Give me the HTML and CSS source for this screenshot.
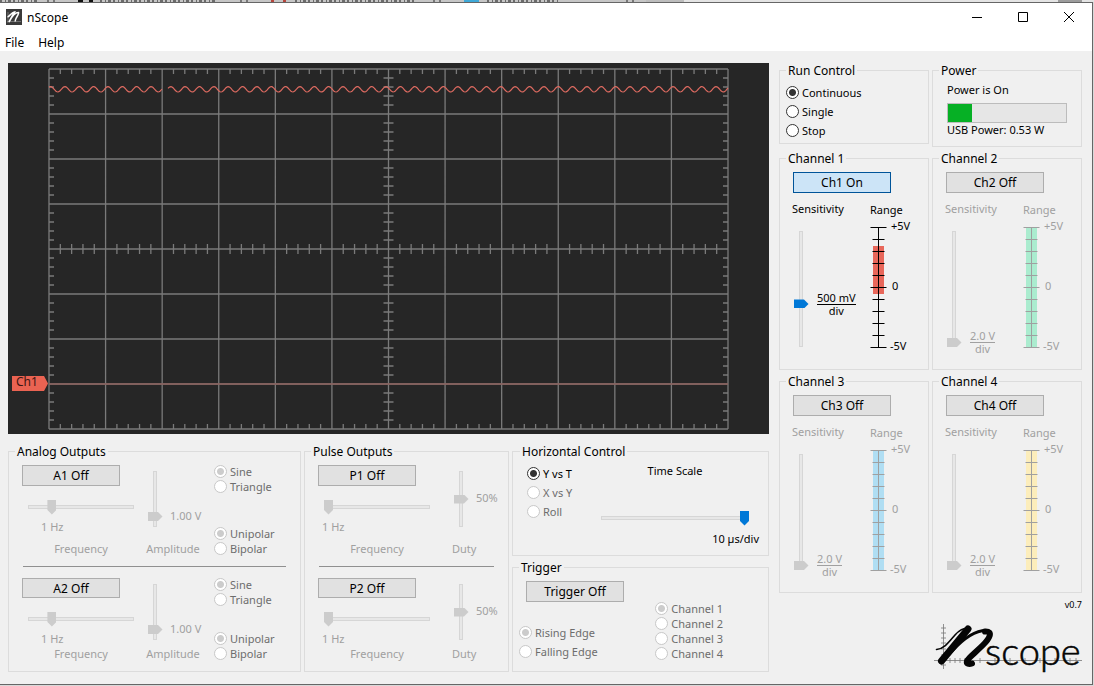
FILE: index.html
```html
<!DOCTYPE html>
<html lang="en">
<head>
<meta charset="utf-8">
<title>nScope</title>
<link rel="stylesheet" href="styles.css">
</head>
<body>
<svg class="backdrop" viewBox="0 0 1094 2" preserveAspectRatio="none" aria-hidden="true">
  <rect width="646" height="2" fill="#c6c6c6"/>
  <rect x="646" width="38" height="2" fill="#bdbdbd"/>
  <rect x="684" width="410" height="2" fill="#e4e4e4"/>
  <rect x="1058" width="24" height="2" fill="#9c9c9c"/>
  <path d="M0 1h38M100 1h117M295 1h120M487 1h73" stroke="#6b6b6b" stroke-width="2" stroke-dasharray="2 3 1 2 3 2"/>
  <path d="M78 1h5M89 1h4" stroke="#111" stroke-width="2"/>
  <path d="M271 1h3M283 1h3" stroke="#b5453c" stroke-width="2"/>
  <path d="M464 1h15" stroke="#3fa9d8" stroke-width="2"/>
  <path d="M47 1h8M240 1h8M433 1h8M626 1h8" stroke="#777" stroke-width="2" stroke-dasharray="2 4"/>
</svg>
<div class="window">
  <header class="titlebar">
    <svg class="app-icon" viewBox="0 0 16 16" aria-hidden="true">
      <rect width="16" height="16" fill="#3a3a3a"/>
      <path d="M2 3v11M1 12.500h14" stroke="#8a8a8a" stroke-width=".7"/>
      <path d="M1.500 8C4 7.500 5 3.500 8.500 3L3 13C5 9 9 3.500 12.500 3.500C13.500 5 8 11 9.500 12.500" fill="none" stroke="#fff" stroke-width="1.600"/>
    </svg>
    <h1 class="title">nScope</h1>
    <button class="caption" aria-label="Minimize"><svg viewBox="0 0 10 10"><path d="M0 5.500h10"/></svg></button>
    <button class="caption" aria-label="Maximize"><svg viewBox="0 0 10 10"><path d="M.5 .5h9v9h-9z"/></svg></button>
    <button class="caption" aria-label="Close"><svg viewBox="0 0 10 10"><path d="M0 0l10 10M10 0L0 10"/></svg></button>
  </header>
  <nav class="menu"><a href="#file">File</a><a href="#help">Help</a></nav>

  <main class="main">
    <div class="left">
      <svg class="scope" viewBox="0 0 761 371" role="img" aria-label="Oscilloscope display">
        <rect width="761" height="371" fill="#262626"/>
        <g id="grid" fill="none" stroke="#7a7a7a" stroke-width="1.300"></g>
        <path d="M41 321H720" stroke="#8b5f5b" stroke-width="1.600"/>
        <path id="trace" fill="none" stroke="#dc6a60" stroke-width="1.200"/>
        <path d="M4 313h32l4 7.500l-4 7.500H4z" fill="#ea6352"/>
        <text class="tag" x="8" y="323">Ch1</text>
      </svg>

      <div class="panels">
        <fieldset class="group">
          <legend>Analog Outputs</legend>
          <div class="output">
            <div class="freq">
              <button class="btn">A1 Off</button>
              <input class="slider" type="range" value="20" disabled aria-label="A1 frequency">
              <output class="hz hz-offset">1 Hz</output>
              <span class="caption-text">Frequency</span>
            </div>
            <div class="level amp">
              <div class="level-row"><input class="slider vertical" type="range" value="13" disabled aria-label="A1 amplitude"><output class="level-low">1.00 V</output></div>
              <span class="caption-text">Amplitude</span>
            </div>
            <div class="shapes">
              <div class="radios"><label><input type="radio" name="a1s" checked disabled>Sine</label><label><input type="radio" name="a1s" disabled>Triangle</label></div>
              <div class="radios"><label><input type="radio" name="a1p" checked disabled>Unipolar</label><label><input type="radio" name="a1p" disabled>Bipolar</label></div>
            </div>
          </div>
          <hr>
          <div class="output short">
            <div class="freq">
              <button class="btn">A2 Off</button>
              <input class="slider" type="range" value="20" disabled aria-label="A2 frequency">
              <output class="hz hz-offset">1 Hz</output>
              <span class="caption-text">Frequency</span>
            </div>
            <div class="level amp">
              <div class="level-row"><input class="slider vertical" type="range" value="13" disabled aria-label="A2 amplitude"><output class="level-low">1.00 V</output></div>
              <span class="caption-text">Amplitude</span>
            </div>
            <div class="shapes">
              <div class="radios"><label><input type="radio" name="a2s" checked disabled>Sine</label><label><input type="radio" name="a2s" disabled>Triangle</label></div>
              <div class="radios"><label><input type="radio" name="a2p" checked disabled>Unipolar</label><label><input type="radio" name="a2p" disabled>Bipolar</label></div>
            </div>
          </div>
        </fieldset>

        <fieldset class="group">
          <legend>Pulse Outputs</legend>
          <div class="output">
            <div class="freq">
              <button class="btn">P1 Off</button>
              <input class="slider" type="range" value="0" disabled aria-label="P1 frequency">
              <output class="hz">1 Hz</output>
              <span class="caption-text">Frequency</span>
            </div>
            <div class="level duty">
              <div class="level-row"><input class="slider vertical" type="range" value="50" disabled aria-label="P1 duty"><output class="level-mid">50%</output></div>
              <span class="caption-text">Duty</span>
            </div>
          </div>
          <hr>
          <div class="output short">
            <div class="freq">
              <button class="btn">P2 Off</button>
              <input class="slider" type="range" value="0" disabled aria-label="P2 frequency">
              <output class="hz">1 Hz</output>
              <span class="caption-text">Frequency</span>
            </div>
            <div class="level duty">
              <div class="level-row"><input class="slider vertical" type="range" value="50" disabled aria-label="P2 duty"><output class="level-mid">50%</output></div>
              <span class="caption-text">Duty</span>
            </div>
          </div>
        </fieldset>

        <div class="stack">
          <fieldset class="group horizontal">
            <legend>Horizontal Control</legend>
            <div class="radios loose"><label><input type="radio" name="mode" checked>Y vs T</label><label><input type="radio" name="mode" disabled>X vs Y</label><label><input type="radio" name="mode" disabled>Roll</label></div>
            <div class="timescale">
              <label for="ts">Time Scale</label>
              <input class="slider" id="ts" type="range" value="100">
              <output for="ts">10 µs/div</output>
            </div>
          </fieldset>
          <fieldset class="group trigger">
            <legend>Trigger</legend>
            <div class="trigger-left">
              <button class="btn">Trigger Off</button>
              <div class="radios loose"><label><input type="radio" name="edge" checked disabled>Rising Edge</label><label><input type="radio" name="edge" disabled>Falling Edge</label></div>
            </div>
            <div class="radios trigger-source"><label><input type="radio" name="src" checked disabled>Channel 1</label><label><input type="radio" name="src" disabled>Channel 2</label><label><input type="radio" name="src" disabled>Channel 3</label><label><input type="radio" name="src" disabled>Channel 4</label></div>
          </fieldset>
        </div>
      </div>
    </div>

    <aside class="right">
      <fieldset class="group run">
        <legend>Run Control</legend>
        <div class="radios loose"><label><input type="radio" name="run" checked>Continuous</label><label><input type="radio" name="run">Single</label><label><input type="radio" name="run">Stop</label></div>
      </fieldset>
      <fieldset class="group power">
        <legend>Power</legend>
        <label for="usb">Power is On</label>
        <progress id="usb" value="20" max="100"></progress>
        <span>USB Power: 0.53 W</span>
      </fieldset>

      <fieldset class="group channel on">
        <legend>Channel 1</legend>
        <button class="btn active">Ch1 On</button>
        <div class="channel-body">
          <div class="sens">
            <label for="s1">Sensitivity</label>
            <div class="sens-row"><input class="slider vertical" id="s1" type="range" value="36"><output class="fraction mid"><span>500 mV</span><span>div</span></output></div>
          </div>
          <div class="range"><span>Range</span><svg viewBox="0 0 50 136"><rect x="5" y="28" width="11" height="48" fill="#e8675a"/><path class="ticks"/><text x="23" y="12">+5V</text><text x="24" y="72">0</text><text x="22" y="132">-5V</text></svg></div>
        </div>
      </fieldset>
      <fieldset class="group channel">
        <legend>Channel 2</legend>
        <button class="btn">Ch2 Off</button>
        <div class="channel-body">
          <div class="sens">
            <label for="s2">Sensitivity</label>
            <div class="sens-row"><input class="slider vertical" id="s2" type="range" value="0" disabled><output class="fraction"><span>2.0 V</span><span>div</span></output></div>
          </div>
          <div class="range"><span>Range</span><svg viewBox="0 0 50 136"><rect x="5" y="9" width="11" height="121" fill="#abeccf"/><path class="ticks"/><text x="23" y="12">+5V</text><text x="24" y="72">0</text><text x="22" y="132">-5V</text></svg></div>
        </div>
      </fieldset>
      <fieldset class="group channel">
        <legend>Channel 3</legend>
        <button class="btn">Ch3 Off</button>
        <div class="channel-body">
          <div class="sens">
            <label for="s3">Sensitivity</label>
            <div class="sens-row"><input class="slider vertical" id="s3" type="range" value="0" disabled><output class="fraction"><span>2.0 V</span><span>div</span></output></div>
          </div>
          <div class="range"><span>Range</span><svg viewBox="0 0 50 136"><rect x="5" y="9" width="11" height="121" fill="#b0def3"/><path class="ticks"/><text x="23" y="12">+5V</text><text x="24" y="72">0</text><text x="22" y="132">-5V</text></svg></div>
        </div>
      </fieldset>
      <fieldset class="group channel">
        <legend>Channel 4</legend>
        <button class="btn">Ch4 Off</button>
        <div class="channel-body">
          <div class="sens">
            <label for="s4">Sensitivity</label>
            <div class="sens-row"><input class="slider vertical" id="s4" type="range" value="0" disabled><output class="fraction"><span>2.0 V</span><span>div</span></output></div>
          </div>
          <div class="range"><span>Range</span><svg viewBox="0 0 50 136"><rect x="5" y="9" width="11" height="121" fill="#fcedbb"/><path class="ticks"/><text x="23" y="12">+5V</text><text x="24" y="72">0</text><text x="22" y="132">-5V</text></svg></div>
        </div>
      </fieldset>

      <div class="brand">
        <span class="version">v0.7</span>
        <svg class="logo" viewBox="0 0 148 54" role="img" aria-label="nScope">
          <path d="M9.500 2V47M7 6h5M7 11h5M7 16h5M7 21h5M7 27h5M7 33h5M7 43h5" stroke="#777" stroke-width=".8" fill="none"/>
          <path d="M0 38.500H148M16 36v5M21 36v5M26 36v5M31 36v5M46 36v5M61 36v5M76 36v5M91 36v5M106 36v5M121 36v5M136 36v5M142 36v5" stroke="#777" stroke-width=".8" fill="none"/>
          <g fill="none" stroke="#050505" stroke-linecap="round" stroke-linejoin="round">
            <path d="M2.500 27.500C10 27 15 20 21 13C25 8.500 29 6 34 6" stroke-width="1.600"/>
            <path d="M34 7L7.500 39" stroke-width="7"/>
            <path d="M18 29C29 17 41 8.500 52 8.500" stroke-width="3.200"/>
            <path d="M51 9.500C60 9 55 17 49 23C41 31 34 36 33 39C32 42 35 42.500 38 41.500" stroke-width="6"/>
          </g>
          <text class="logo-text" x="51" y="43">scope</text>
        </svg>
      </div>
    </aside>
  </main>
</div>
<script src="scope.js"></script>
</body>
</html>
```
FILE: styles.css
```css
* { box-sizing: border-box; }

body {
  margin: 0;
  min-height: 100vh;
  display: flex;
  flex-direction: column;
  background: #d8d8d8;
  color: #000;
  font: 11px/15px "Noto Sans", "Open Sans", sans-serif;
}

.backdrop { display: block; width: 100%; height: 2px; }

.window {
  flex: 1;
  display: flex;
  flex-direction: column;
  margin: 0 1px 1px 0;
  border: solid #666;
  border-width: 1px 1px 1px 0;
  background: #f0f0f0;
}

.titlebar {
  display: flex;
  align-items: center;
  height: 28px;
  padding-left: 6px;
  background: #fff;
}
.app-icon { width: 16px; height: 16px; }
.title { flex: 1; margin: 0 0 0 5px; font-size: 12px; font-weight: 400; }
.caption {
  width: 46px;
  height: 28px;
  padding: 0;
  border: 0;
  background: none;
  display: grid;
  place-items: center;
}
.caption svg { width: 10px; height: 10px; overflow: visible; fill: none; stroke: #000; stroke-width: 1; }

.menu {
  display: flex;
  gap: 14px;
  height: 20px;
  padding: 4px 0 0 5px;
  background: #fff;
  font-size: 12px;
}
.menu a { color: #000; text-decoration: none; }

.main {
  display: grid;
  grid-template-columns: 1fr 303px;
  gap: 10px;
  padding: 12px 10px 8px 8px;
}

.scope { display: block; width: 100%; height: auto; }
.tag { font-size: 12px; fill: #3d1512; }

.panels {
  display: grid;
  grid-template-columns: 293fr 205fr 257fr;
  gap: 3px;
  margin-top: 10px;
}
.stack { display: flex; flex-direction: column; gap: 4px; }

.group {
  min-width: 0;
  margin: 0;
  padding: 6px 13px 10px;
  border: 1px solid #dcdcdc;
}
.group legend { height: 15px; margin-left: -7px; padding: 0 2px; font-size: 12px; }
.group hr { margin: 10px 1px 11px; border: 0; border-top: 1px solid #909090; }

.btn {
  width: 98px;
  height: 21px;
  padding: 0;
  border: 1px solid #adadad;
  background: #e1e1e1;
  color: #000;
  font: 12px/17px "Noto Sans", "Open Sans", sans-serif;
}
.btn.active { border-color: #005499; background: #cce4f7; }

/* radios */
.radios { display: flex; flex-direction: column; }
.radios.loose { gap: 4px; }
.radios label { display: flex; align-items: center; gap: 3px; height: 15px; white-space: nowrap; }
.radios label:has(:disabled) { color: #6d6d6d; }
.radios input {
  appearance: none;
  flex: none;
  width: 13px;
  height: 13px;
  margin: 0;
  border: 1px solid #333;
  border-radius: 50%;
  background: #fff;
}
.radios input:checked { background: radial-gradient(circle, #333 3px, #fff 4px); }
.radios input:disabled { border-color: #c8c8c8; }
.radios input:checked:disabled { background: radial-gradient(circle, #ccc 3px, #fff 4px); }

/* sliders */
.slider {
  appearance: none;
  flex: none;
  width: 106px;
  height: 16px;
  margin: 0;
  background:
    linear-gradient(#e7e7e7, #e7e7e7) center / calc(100% - 2px) 2px no-repeat,
    linear-gradient(#d6d6d6, #d6d6d6) center / 100% 4px no-repeat;
}
.slider::-webkit-slider-thumb {
  appearance: none;
  width: 9px;
  height: 15px;
  border: 0;
  border-radius: 0;
  background: #0078d7;
  clip-path: polygon(0 0, 100% 0, 100% 70%, 50% 100%, 0 70%);
}
.slider.vertical {
  writing-mode: vertical-lr;
  direction: rtl;
  width: 16px;
  height: 56px;
  background:
    linear-gradient(#e7e7e7, #e7e7e7) center / 2px calc(100% - 2px) no-repeat,
    linear-gradient(#d6d6d6, #d6d6d6) center / 4px 100% no-repeat;
}
.slider.vertical::-webkit-slider-thumb {
  width: 15px;
  height: 9px;
  clip-path: polygon(0 0, 70% 0, 100% 50%, 70% 100%, 0 100%);
}
.slider:disabled::-webkit-slider-thumb { background: #ccc; }

/* signal outputs */
.output { display: flex; height: 91px; color: #a0a0a0; }
.output.short { height: 83px; }
.freq { display: flex; flex: none; flex-direction: column; width: 118px; }
.freq .slider { margin: 13px 0 0 6px; }
.hz { margin: 4px 0 0 4px; }
.hz-offset { margin-left: 19px; }
.caption-text { margin-top: auto; text-align: center; }
.level { display: flex; flex-direction: column; }
.level-row { display: flex; align-items: center; gap: 7px; margin: 6px 0 0 1px; }
.amp { width: 54px; margin-left: 6px; }
.amp .level-row { white-space: nowrap; }
.level-low { margin-top: 32px; }
.level-mid { margin-bottom: 3px; }
.duty { margin-left: 16px; }
.duty .caption-text { width: 24px; }
.shapes { display: flex; flex-direction: column; justify-content: space-between; margin: -1px 0 0 14px; }

.horizontal { display: flex; justify-content: space-between; height: 112px; padding: 7px 9px 8px 14px; }
.timescale { display: flex; flex: none; flex-direction: column; width: 158px; }
.timescale label { width: 148px; margin-top: -3px; text-align: center; }
.timescale .slider { width: 148px; margin-top: 32px; }
.timescale output { margin-top: 5px; text-align: right; }

.trigger { display: flex; justify-content: space-between; height: 112px; padding-right: 45px; }
.trigger-left { display: flex; flex-direction: column; gap: 23px; }
.trigger-left .radios { margin-left: -7px; }
.trigger-source { margin-top: 20px; }

/* right column */
.right {
  display: grid;
  grid-template-columns: 1fr 1fr;
  grid-template-rows: auto auto auto 1fr;
  gap: 4px 3px;
  align-items: start;
}
.run { padding: 7px 6px 5px; }
.run legend { margin-left: 0; }
.power { display: flex; flex-direction: column; height: 84px; padding: 4px 14px; }
.power legend { margin-left: -8px; }
.power progress {
  appearance: none;
  width: 120px;
  height: 20px;
  margin: 6px 0 0;
  border: 1px solid #bcbcbc;
  background: #e6e6e6;
}
.power progress::-webkit-progress-bar { background: #e6e6e6; }
.power progress::-webkit-progress-value { background: #06b025; }
.power span { margin-top: -1px; }

.channel { height: 219px; }
.channel-body { display: flex; color: #a0a0a0; }
.on .channel-body { color: #000; }
.sens { flex: none; width: 75px; padding-top: 8px; }
.sens label { margin-left: -1px; }
.sens-row { display: flex; gap: 8px; height: 124px; margin-top: 15px; }
.sens .slider { height: 116px; }
.fraction { display: flex; flex-direction: column; align-self: flex-end; text-align: center; line-height: 12px; white-space: nowrap; }
.fraction span:first-child { border-bottom: 1px solid; }
.fraction.mid { margin-bottom: 38px; }
.range { flex: none; padding-top: 9px; }
.range span { display: block; margin-left: 2px; }
.range svg { display: block; width: 50px; height: 136px; margin-top: 1px; }
.range text { fill: currentColor; font-size: 11px; }
.ticks { fill: none; stroke: currentColor; stroke-width: 1; }

.brand { grid-column: 1 / -1; display: flex; flex-direction: column; align-items: flex-end; }
.version { font-size: 9px; line-height: 15px; }
.logo { width: 148px; height: 54px; margin-top: 10px; overflow: visible; }
.logo-text { font: 300 38px Lato, sans-serif; fill: #050505; stroke: #050505; stroke-width: .6; }
```
FILE: scope.js
```javascript
// Graticule: 12 x 8 divisions, each split into five minor ticks.
const X0 = 41, Y0 = 6, W = 679, H = 360, DX = W / 12, DY = H / 8;
let d = "";
for (let i = 0; i <= 12; i++) d += `M${X0 + i * DX} ${Y0}v${H}`;
for (let j = 0; j <= 8; j++) d += `M${X0} ${Y0 + j * DY}h${W}`;
for (let i = 1; i < 60; i++) {
  if (i % 5 === 0) continue;
  const x = X0 + i * DX / 5;
  d += `M${x} ${Y0}v5M${x} ${Y0 + H / 2 - 5}v10M${x} ${Y0 + H}v-5`;
}
for (let j = 1; j < 40; j++) {
  if (j % 5 === 0) continue;
  const y = Y0 + j * DY / 5;
  d += `M${X0} ${y}h5M${X0 + W / 2 - 5} ${y}h10M${X0 + W} ${y}h-5`;
}
const grid = document.createElementNS("http://www.w3.org/2000/svg", "path");
grid.setAttribute("d", d);
document.getElementById("grid").append(grid);

const wave = (from, to, peak) => {
  let p = "";
  for (let x = from; x <= to; x++) {
    const y = 26.3 - 2.7 * Math.cos(2 * Math.PI * (x - peak) / 14.35);
    p += `${p ? "L" : "M"}${x} ${y.toFixed(1)}`;
  }
  return p;
};
document.getElementById("trace").setAttribute("d", wave(41, 154, 42.6) + wave(160, 720, 162.8));

// Range scale: one tick per volt, long ticks at the ends and at zero.
let t = "M10.5 9v121";
for (let v = 0; v <= 10; v++) {
  const half = v % 5 === 0 ? 8 : 6;
  t += `M${10.5 - half} ${9.5 + v * 12}h${half * 2}`;
}
document.querySelectorAll(".ticks").forEach(p => p.setAttribute("d", t));
```
